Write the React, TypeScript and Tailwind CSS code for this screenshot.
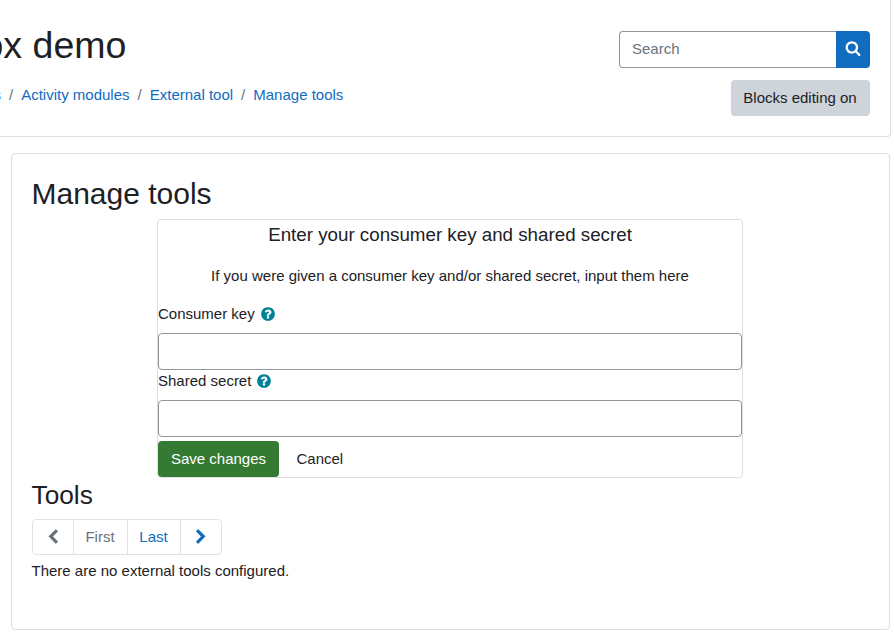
import React from "react";

const icons = {
  search:
    "M1216 832q0-185-131.5-316.5t-316.5-131.5-316.5 131.5-131.5 316.5 131.5 316.5 316.5 131.5 316.5-131.5 131.5-316.5zm512 832q0 52-38 90t-90 38q-54 0-90-38l-343-342q-179 124-399 124-143 0-273.5-55.5t-225-150-150-225-55.5-273.5 55.5-273.5 150-225 225-150 273.5-55.5 273.5 55.5 225 150 150 225 55.5 273.5q0 220-124 399l343 343q37 37 37 90z",
  help: "M1024 1376v-192q0-14-9-23t-23-9h-192q-14 0-23 9t-9 23v192q0 14 9 23t23 9h192q14 0 23-9t9-23zm256-672q0-88-55.5-163t-138.5-116-170-41q-243 0-371 213-15 24 8 42l132 100q7 6 19 6 16 0 25-12 53-68 86-92 34-24 86-24 48 0 85.5 26t37.5 59q0 38-20 61t-68 45q-63 28-115.5 86.5t-52.5 125.5v36q0 14 9 23t23 9h192q14 0 23-9t9-23q0-19 21.5-49.5t54.5-49.5q32-18 49-28.5t46-35 44.5-48 28-60.5 12.5-81zm384 192q0 209-103 385.5t-279.5 279.5-385.5 103-385.5-103-279.5-279.5-103-385.5 103-385.5 279.5-279.5 385.5-103 385.5 103 279.5 279.5 103 385.5z",
  left: "M1427 301l-531 531 531 531q19 19 19 45t-19 45l-166 166q-19 19-45 19t-45-19l-742-742q-19-19-19-45t19-45l742-742q19-19 45-19t45 19l166 166q19 19 19 45t-19 45z",
  right:
    "M1363 877l-742 742q-19 19-45 19t-45-19l-166-166q-19-19-19-45t19-45l531-531-531-531q-19-19-19-45t19-45l166-166q19-19 45-19t45 19l742 742q19 19 19 45t-19 45z",
};

function Icon({ name, className = "" }: { name: keyof typeof icons; className?: string }) {
  return (
    <svg viewBox="0 0 1792 1792" className={`size-4 shrink-0 fill-current ${className}`} aria-hidden="true">
      <path d={icons[name]} />
    </svg>
  );
}

function Field({ label }: { label: string }) {
  return (
    <label className="block h-[67px]">
      <span className="flex h-[22px] items-center">
        {label}
        <Icon name="help" className="mb-[1px] ml-[5px] text-[#008196]" />
      </span>
      <input className="mt-[7px] block h-[37px] w-full rounded border border-[#8f959e] px-3" />
    </label>
  );
}

const crumbs = ["Activity modules", "External tool", "Manage tools"];

export default function App() {
  return (
    <div className="h-[640px] w-[894px] overflow-hidden bg-white font-['Liberation_Sans',Arial,sans-serif] text-[15px] leading-[22.5px] text-[#1d2125]">
      <header className="flex h-[137px] w-[891px] justify-between rounded-br border-r border-b border-[#dedede] pr-5">
        <div className="pt-[23px]">
          <h1 className="-ml-[17.5px] text-[37.5px] leading-[45px] whitespace-nowrap">ox demo</h1>
          <nav className="mt-[16px] -ml-[6.5px] flex whitespace-nowrap text-[#0f6cbf]">
            <span>s</span>
            {crumbs.map((crumb) => (
              <span key={crumb} className="flex">
                <span className="px-2 text-[#6a737b]">/</span>
                <a>{crumb}</a>
              </span>
            ))}
          </nav>
        </div>
        <div className="flex flex-col items-end pt-[31px]">
          <div className="flex h-[37px]">
            <input
              placeholder="Search"
              className="w-[217px] rounded-l border border-r-0 border-[#8f959e] px-3 placeholder:text-[#6a737b]"
            />
            <button className="flex w-[34px] items-center justify-center rounded-r bg-[#0f6cbf] pr-px pb-[3px] text-white">
              <Icon name="search" />
            </button>
          </div>
          <button className="mt-3 h-9 w-[139px] rounded bg-[#ced4da] pr-px">Blocks editing on</button>
        </div>
      </header>

      <main className="mt-4 ml-[11px] h-[477px] w-[879px] rounded border border-[#dedede] px-5">
        <h2 className="mt-[22px] -ml-[0.5px] text-[30px] leading-9">Manage tools</h2>
        <form className="mt-[7px] ml-[125px] h-[259px] w-[586px] rounded border border-[#dedede]">
          <h5 className="pt-[3px] text-center text-[18.75px] leading-[23px]">Enter your consumer key and shared secret</h5>
          <p className="mt-[19px] mb-4 text-center">If you were given a consumer key and/or shared secret, input them here</p>
          <Field label="Consumer key" />
          <Field label="Shared secret" />
          <div className="mt-[3px] flex h-9">
            <button className="w-[121px] rounded bg-[#357a32] pt-px text-white">Save changes</button>
            <button className="ml-[5.5px] px-3 pt-px">Cancel</button>
          </div>
        </form>
        <h3 className="mt-[1px] -ml-[0.5px] text-[26.25px] leading-8">Tools</h3>
        <div className="mt-2 flex h-9 w-[190px] divide-x divide-[#dee2e6] rounded border border-[#dee2e6] text-[#0f6cbf]">
          <span className="flex w-[41px] items-center justify-center pr-px pb-px text-[#6a737b]">
            <Icon name="left" />
          </span>
          <span className="flex w-[54px] items-center justify-center pr-px text-[#6a737b]">First</span>
          <span className="flex w-[53px] items-center justify-center pr-px">Last</span>
          <span className="flex w-10 items-center justify-center pb-px">
            <Icon name="right" />
          </span>
        </div>
        <p className="mt-[5px] -ml-[0.5px]">There are no external tools configured.</p>
      </main>
    </div>
  );
}
